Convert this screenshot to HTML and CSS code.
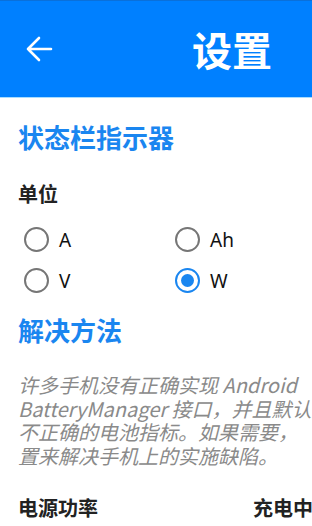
FILE: index.html
```html
<!DOCTYPE html>
<html lang="zh-CN">
<head>
<meta charset="utf-8">
<link rel="stylesheet" href="styles.css">
</head>
<body>
<div class="app">
  <header class="topbar">
    <div class="back">
      <svg width="30" height="30" viewBox="0 0 30 30"><path d="M27 15H4M15 4L4 15l11 11" fill="none" stroke="#fff" stroke-width="2.6" stroke-linecap="round" stroke-linejoin="round"/></svg>
    </div>
    <h1 class="title">设置</h1>
  </header>
  <main class="content">
    <h2 class="sec-title first">状态栏指示器</h2>
    <div class="label">单位</div>
    <div class="radios">
      <div class="radio"><span class="dot"></span><span class="rlabel">A</span></div>
      <div class="radio"><span class="dot"></span><span class="rlabel">Ah</span></div>
      <div class="radio"><span class="dot"></span><span class="rlabel">V</span></div>
      <div class="radio checked"><span class="dot"></span><span class="rlabel">W</span></div>
    </div>
    <h2 class="sec-title second">解决方法</h2>
    <p class="desc">
      <span class="line">许多手机没有正确实现 Android</span>
      <span class="line">BatteryManager 接口，并且默认报告</span>
      <span class="line">不正确的电池指标。如果需要，</span>
      <span class="line">置来解决手机上的实施缺陷。</span>
    </p>
    <div class="setting">
      <span class="skey">电源功率</span>
      <span class="sval">充电中</span>
    </div>
  </main>
</div>
</body>
</html>
```
FILE: styles.css
```css
html, body {
  margin: 0;
  padding: 0;
  background: #fff;
}
body {
  width: 312px;
  height: 526px;
  overflow: hidden;
  font-family: "Noto Sans", "Noto Sans CJK SC", sans-serif;
}
.app {
  width: 312px;
}
.topbar {
  height: 98px;
  box-sizing: border-box;
  background: #0080ff;
  border-top: 1px solid #0a70da;
  border-bottom: 1px solid #a8dcff;
  display: flex;
  align-items: center;
}
.back {
  width: 30px;
  height: 30px;
  margin-left: 24px;
  display: flex;
}
.title {
  margin: 0 0 0 138px;
  color: #fff;
  font-size: 40px;
  font-weight: 700;
  line-height: 48px;
  white-space: nowrap;
  font-family: "Noto Sans CJK SC", sans-serif;
}
.content {
  padding-left: 18px;
  width: 420px;
}
.sec-title {
  margin: 0;
  font-family: "Noto Sans CJK SC", sans-serif;
  font-size: 26px;
  font-weight: 700;
  color: #1a86f0;
  line-height: 36px;
  height: 36px;
}
.sec-title.first {
  margin-top: 21px;
}
.sec-title.second {
  margin-top: 11px;
}
.label {
  margin-top: 25px;
  font-family: "Noto Sans CJK SC", sans-serif;
  font-size: 20px;
  font-weight: 700;
  color: #222;
  line-height: 28px;
}
.radios {
  margin-top: 11px;
  display: grid;
  grid-template-columns: 151px 151px;
  grid-auto-rows: 41px;
}
.radio {
  display: flex;
  align-items: center;
  padding-left: 6px;
}
.dot {
  width: 21px;
  height: 21px;
  border-radius: 50%;
  border: 2.5px solid #767676;
  flex: none;
  position: relative;
}
.radio.checked .dot {
  border-color: #1a86f0;
}
.radio.checked .dot::after {
  content: "";
  position: absolute;
  left: 4px;
  top: 4px;
  width: 13px;
  height: 13px;
  border-radius: 50%;
  background: #1a86f0;
}
.rlabel {
  margin-left: 10px;
  font-size: 19px;
  color: #111;
}
.desc {
  margin: 25px 0 0;
  font-family: "Noto Sans CJK SC", sans-serif;
  font-style: italic;
  font-size: 20px;
  line-height: 23.5px;
  color: #8a8a8a;
}
.line {
  display: block;
  white-space: nowrap;
}
.setting {
  margin-top: 27px;
  display: flex;
  font-family: "Noto Sans CJK SC", sans-serif;
  font-size: 20px;
  font-weight: 700;
  color: #222;
  line-height: 28px;
}
.skey {
  width: 235px;
}
```
